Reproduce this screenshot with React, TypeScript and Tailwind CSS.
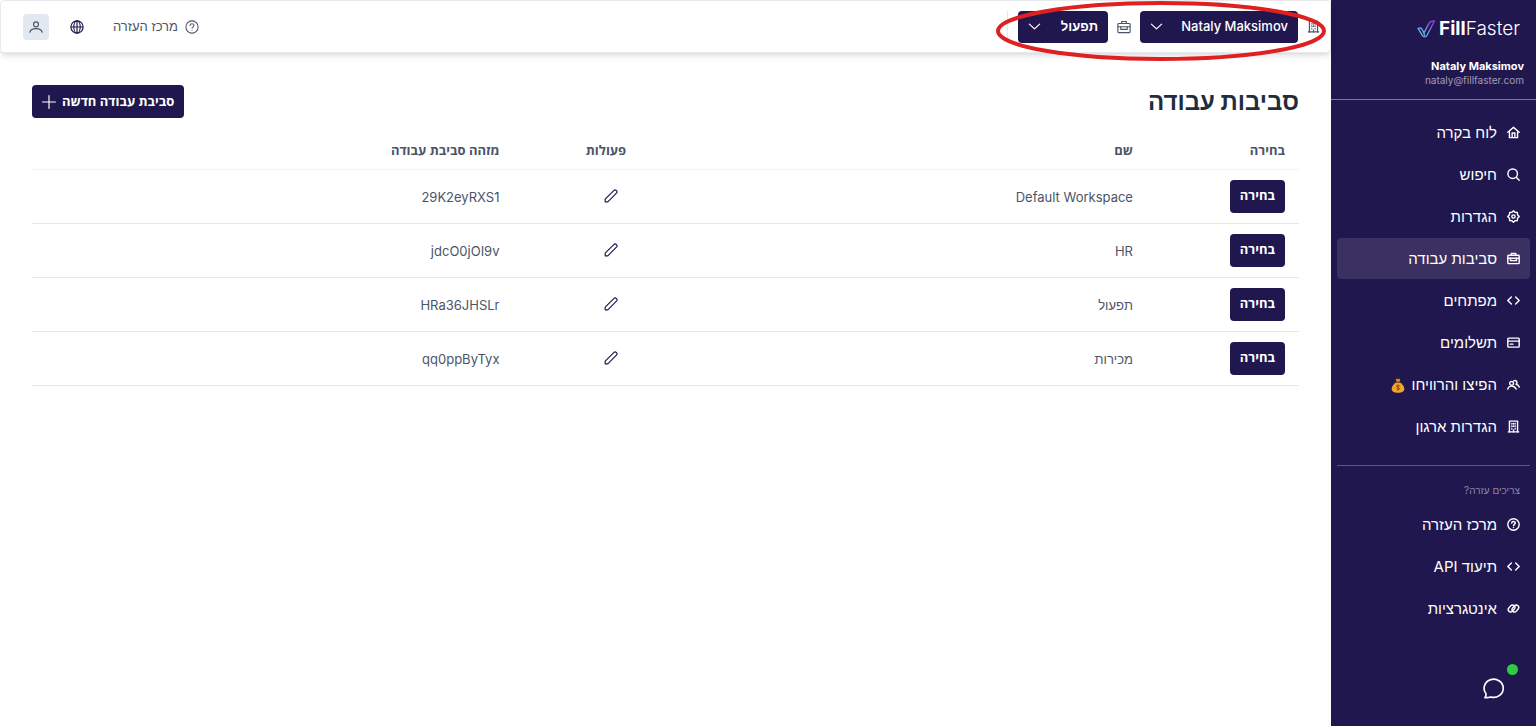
import type { ReactNode } from 'react';

type IconProps = { className?: string; children: ReactNode; width?: number };

function Icon({ className = 'size-[14px]', children, width = 1.8 }: IconProps) {
  return (
    <svg
      viewBox="0 0 24 24"
      className={`shrink-0 ${className}`}
      fill="none"
      stroke="currentColor"
      strokeWidth={width}
      strokeLinecap="round"
      strokeLinejoin="round"
      aria-hidden="true"
    >
      {children}
    </svg>
  );
}

const home = (
  <>
    <path d="M1.500 11.500 12 2.500l10.500 9" />
    <path d="M4.500 10v11.500h15V10" />
    <path d="M9.500 21v-8h5v8" />
  </>
);
const search = (
  <>
    <circle cx="10.500" cy="10.500" r="8.800" />
    <path d="m17 17 5.500 5.500" />
  </>
);
const gear = (
  <>
    <path d="M12 1.500 14.800 4.200 19 4.500 19.500 8.800 22.500 12 19.500 15.200 19 19.500 14.800 19.800 12 22.500 9.200 19.800 5 19.500 4.500 15.200 1.500 12 4.500 8.800 5 4.500 9.200 4.200Z" />
    <circle cx="12" cy="12" r="3" />
  </>
);
const briefcase = (
  <>
    <rect x="1.500" y="6" width="21" height="15.500" rx="1.500" />
    <path d="M8 6V2.500h8V6" />
    <path d="M2 11.500h20" />
    <path d="M6.500 11.500V16h11v-4.500" />
  </>
);
const code = (
  <>
    <path d="M8 5.500 1.500 12 8 18.500" />
    <path d="m16 5.500 6.500 6.500-6.500 6.500" />
  </>
);
const card = (
  <>
    <rect x="1.500" y="4" width="21" height="16.500" rx="1.500" />
    <path d="M2 9.500h20" />
    <path d="M6 15h5" />
  </>
);
const users = (
  <>
    <circle cx="8.500" cy="10" r="3.500" />
    <path d="M1.500 20.500c.8-4 3.500-5.500 7-5.500 4 0 6.700 1.500 8.500 5.500" />
    <path d="M12.500 5.200a3.700 3.700 0 1 1 4 6.300c3 .5 5.200 2.200 6 5.200" />
  </>
);
const building = (
  <>
    <path d="M4.500 22V2h15v20" />
    <path d="M2.500 22h19" />
    <path d="M9 6.500v1M15 6.500v1M9 11v1M15 11v1M9 15.500v1M15 15.500v1M12 18.500V22M12 6.500v1M12 11v1" />
  </>
);
const help = (
  <>
    <circle cx="12" cy="12" r="10.500" />
    <path d="M8.700 9.500c0-4 6.600-4 6.600-.2 0 2.400-3.300 2.500-3.300 5" />
    <path d="M12 17.400v.2" />
  </>
);
const link = (
  <>
    <rect x="1.500" y="7.500" width="14" height="9" rx="4.500" transform="rotate(-50 8.500 12)" />
    <rect x="8.500" y="7.500" width="14" height="9" rx="4.500" transform="rotate(-50 15.500 12)" />
  </>
);
const globe = (
  <>
    <circle cx="12" cy="12" r="10.500" />
    <ellipse cx="12" cy="12" rx="5.500" ry="10.500" />
    <path d="M2 12h20M12 2v20" />
  </>
);
const person = (
  <>
    <circle cx="12" cy="7.500" r="4.200" />
    <path d="M1.500 21c1.200-4.700 4.500-6.200 10.500-6.200s9.300 1.500 10.500 6.200" />
  </>
);
const pencil = <path d="M2 22v-4.500L16.800 2.700a2.800 2.800 0 0 1 4.500 4.500L6.500 22Z" />;
const chevron = <path d="m2.500 7.500 9.500 9 9.500-9" />;

const mainLinks: { label: string; icon: ReactNode; active?: boolean; bag?: boolean }[] = [
  { label: 'לוח בקרה', icon: home },
  { label: 'חיפוש', icon: search },
  { label: 'הגדרות', icon: gear },
  { label: 'סביבות עבודה', icon: briefcase, active: true },
  { label: 'מפתחים', icon: code },
  { label: 'תשלומים', icon: card },
  { label: 'הפיצו והרוויחו', icon: users, bag: true },
  { label: 'הגדרות ארגון', icon: building },
];

const helpLinks = [
  { label: 'מרכז העזרה', icon: help },
  { label: 'תיעוד API', icon: code },
  { label: 'אינטגרציות', icon: link },
];

const workspaces = [
  { name: 'Default Workspace', id: '29K2eyRXS1' },
  { name: 'HR', id: 'jdcO0jOI9v' },
  { name: 'תפעול', id: 'HRa36JHSLr' },
  { name: 'מכירות', id: 'qq0ppByTyx' },
];

function MoneyBag() {
  return (
    <svg viewBox="0 0 24 26" className="h-[15px] w-[14px] shrink-0" aria-hidden="true">
      <path d="M8 2.500 10 1l2 1.200L14 1l2 1.500-2 5h-4Z" fill="#d98a1c" />
      <path d="M9.500 7h5c5 3 8.500 7.500 8.500 12 0 4-4 6.500-11 6.500S1 23 1 19c0-4.500 3.500-9 8.500-12Z" fill="#f0a32f" />
      <path d="M8.500 7.500h7" stroke="#8a4b12" strokeWidth="2" strokeLinecap="round" />
      <path
        d="M14.800 13.500c-1-1.300-5.300-1.300-5.300 1s5.300 1.300 5.300 3.700-4.400 2.400-5.500.8M12 11.500v10"
        fill="none"
        stroke="#7a4310"
        strokeWidth="1.500"
      />
    </svg>
  );
}

function Logo() {
  return (
    <a href="#home" dir="ltr" aria-label="FillFaster" className="flex items-center gap-[3px] text-[19px] leading-6 text-white">
      <svg viewBox="0 0 36 36" className="size-[19px]" fill="none" aria-hidden="true">
        <defs>
          <linearGradient id="mark" x1="4" y1="30" x2="32" y2="4" gradientUnits="userSpaceOnUse">
            <stop offset="0" stopColor="#5cc3e8" />
            <stop offset="0.500" stopColor="#6f8fe0" />
            <stop offset="1" stopColor="#9a2fe0" />
          </linearGradient>
        </defs>
        <path
          d="M2 16c4-1.500 7-.5 8.500 3l2.500 6L23 6c1.700-3.500 5-4.500 10-4L19 29c-2 4-7 4-9 0Z M13 25l2 5"
          stroke="url(#mark)"
          strokeWidth="2.600"
          strokeLinejoin="round"
        />
      </svg>
      <span className="font-light">
        <span className="font-bold">Fill</span>Faster
      </span>
    </a>
  );
}

function NavLink({ label, icon, active, bag }: { label: string; icon: ReactNode; active?: boolean; bag?: boolean }) {
  return (
    <li>
      <a
        href="#"
        aria-current={active ? 'page' : undefined}
        className={`flex h-[41px] items-center gap-[10px] rounded px-[10px] text-[15px] text-white ${active ? 'bg-[#3a3061]' : ''}`}
      >
        <Icon className="size-[13px]" width={2.6}>
          {icon}
        </Icon>
        <span className="flex items-center gap-[7px] pt-[2px]">
          {label}
          {bag && <MoneyBag />}
        </span>
      </a>
    </li>
  );
}

function Picker({ label, options, className }: { label: string; options: string[]; className: string }) {
  return (
    <div className={`relative ${className}`}>
      <select
        aria-label={label}
        className="h-8 w-full appearance-none rounded bg-[#21174f] ps-[10px] pe-8 text-[13px] text-white"
      >
        {options.map((o) => (
          <option key={o}>{o}</option>
        ))}
      </select>
      <span className="pointer-events-none absolute inset-y-0 left-[10px] flex items-center text-white">
        <Icon className="size-[13px]" width={2.2}>
          {chevron}
        </Icon>
      </span>
    </div>
  );
}

export default function App() {
  return (
    <div
      dir="rtl"
      className="flex min-h-screen bg-white font-['Inter','Liberation_Sans',sans-serif] text-[13px] text-[#4a5568]"
    >
      <aside className="flex w-[205px] shrink-0 flex-col bg-[#21174f]">
        <div className="flex flex-col items-start border-b border-[#7d769c] px-3 pt-[17px] pb-[13px]">
          <div className="pr-1">
            <Logo />
          </div>
          <p className="mt-[17px] text-[11px] leading-4 font-bold text-white">Nataly Maksimov</p>
          <p className="text-[10px] leading-3 text-[#a19bb8]">nataly@fillfaster.com</p>
        </div>
        <nav aria-label="ראשי" className="px-[6px] pt-3">
          <ul className="flex flex-col gap-px">
            {mainLinks.map((l) => (
              <NavLink key={l.label} {...l} />
            ))}
          </ul>
          <hr className="mt-[18px] border-[#5f5783]" />
          <p className="mt-4 mb-[6px] px-[10px] text-[10px] leading-4 text-[#8d86a8]">צריכים עזרה?</p>
          <ul className="flex flex-col gap-px">
            {helpLinks.map((l) => (
              <NavLink key={l.label} {...l} />
            ))}
          </ul>
        </nav>
        <div className="mt-auto flex px-[30px] pb-[26px]">
          <button type="button" aria-label="צ׳אט" className="relative text-white">
            <Icon className="size-[23px]" width={1.7}>
              <path d="M2 21.500c1-1.200 1.400-2.600 1-4.200A10 9.500 0 1 1 8 20.800c-2 .8-4 .8-6 .7Z" />
            </Icon>
            <span className="absolute -top-[13px] -right-[12px] size-[11px] rounded-full bg-[#2ecc40]" />
          </button>
        </div>
      </aside>

      <div className="min-w-0 flex-1">
        <header className="relative flex h-[53px] items-center justify-between rounded border border-[#e8eaed] bg-white pr-[10px] pl-[22px] shadow-md">
          <div className="flex items-center">
            <Icon className="size-[13px]" width={2.2}>
              {building}
            </Icon>
            <Picker label="ארגון" options={['Nataly Maksimov']} className="mr-[9px] w-[158px] font-medium" />
            <Icon className="mx-[9px] size-[14px]" width={2}>
              {briefcase}
            </Icon>
            <Picker
              label="סביבת עבודה"
              options={['תפעול', 'HR', 'מכירות']}
              className="w-[90px] font-semibold"
            />
            <span className="mr-[10px] h-8 w-px bg-[#e5e8ec]" />
          </div>
          <div className="flex items-center">
            <a href="#help" className="flex items-center gap-[7px]">
              <Icon>{help}</Icon>
              מרכז העזרה
            </a>
            <button type="button" aria-label="שפה" className="mr-[29px] text-[#21174f]">
              <Icon width={2}>{globe}</Icon>
            </button>
            <button
              type="button"
              aria-label="חשבון"
              className="mr-[21px] flex size-[26px] items-center justify-center rounded bg-[#e2e8f0]"
            >
              <Icon width={2}>{person}</Icon>
            </button>
          </div>
          <svg
            viewBox="0 0 330 60"
            className="pointer-events-none absolute top-0 right-[4px] h-[60px] w-[330px]"
            fill="none"
            aria-hidden="true"
          >
            <ellipse cx="165" cy="30" rx="163" ry="28" stroke="#df2020" strokeWidth="4" />
          </svg>
        </header>

        <main className="px-8 pt-8">
          <div className="flex items-center justify-between">
            <h1 className="text-[24px] leading-8 font-bold text-[#1f2d3d]">סביבות עבודה</h1>
            <button
              type="button"
              className="flex h-[33px] items-center gap-[6px] rounded bg-[#21174f] px-[10px] font-['Open_Sans',sans-serif] font-bold text-white"
            >
              סביבת עבודה חדשה
              <Icon width={2}>
                <path d="M12 1v22M1 12h22" />
              </Icon>
            </button>
          </div>
          <table className="mt-[14px] w-full table-fixed border-collapse">
            <thead>
              <tr className="h-[37px] border-b border-[#eff4f6] text-right font-['Open_Sans',sans-serif]">
                <th className="w-[12%] px-[14px] font-bold">בחירה</th>
                <th className="w-[40%] px-[14px] font-bold">שם</th>
                <th className="w-[10%] px-[14px] font-bold">פעולות</th>
                <th className="w-[38%] px-[14px] font-bold">מזהה סביבת עבודה</th>
              </tr>
            </thead>
            <tbody>
              {workspaces.map((w) => (
                <tr key={w.id} className="border-b border-[#e5e7eb]">
                  <td className="px-[14px] py-[10px]">
                    <button
                      type="button"
                      className="flex h-[33px] items-center rounded bg-[#21174f] px-[10px] font-['Open_Sans',sans-serif] font-bold text-white"
                    >
                      בחירה
                    </button>
                  </td>
                  <td className="px-[14px] pt-[3px]">{w.name}</td>
                  <td className="px-[14px]">
                    <button type="button" aria-label={`עריכת ${w.name}`} className="flex p-2 text-[#21174f]">
                      <Icon width={2}>{pencil}</Icon>
                    </button>
                  </td>
                  <td className="px-[14px] pt-[3px]">{w.id}</td>
                </tr>
              ))}
            </tbody>
          </table>
        </main>
      </div>
    </div>
  );
}
